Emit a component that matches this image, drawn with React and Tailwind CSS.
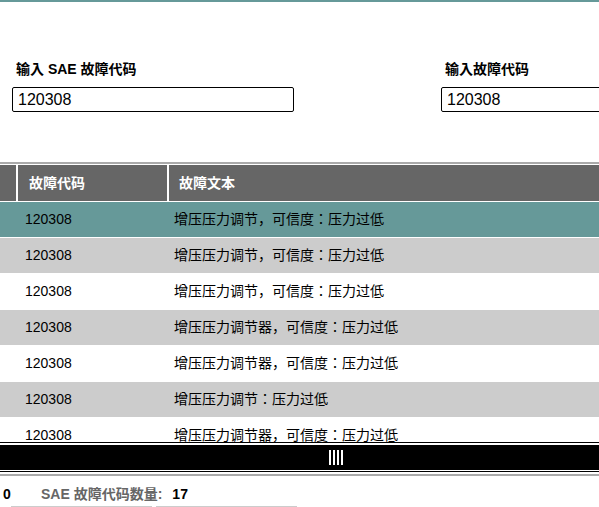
import React from "react";

const rows = [
  { code: "120308", text: "增压压力调节，可信度：压力过低", bg: "bg-[#669999]" },
  { code: "120308", text: "增压压力调节，可信度：压力过低", bg: "bg-[#cccccc]" },
  { code: "120308", text: "增压压力调节，可信度：压力过低", bg: "bg-white" },
  { code: "120308", text: "增压压力调节器，可信度：压力过低", bg: "bg-[#cccccc]" },
  { code: "120308", text: "增压压力调节器，可信度：压力过低", bg: "bg-white" },
  { code: "120308", text: "增压压力调节：压力过低", bg: "bg-[#cccccc]" },
  { code: "120308", text: "增压压力调节器，可信度：压力过低", bg: "bg-white" },
];

export default function App() {
  return (
    <div
      className="w-[599px] h-[507px] overflow-hidden bg-white flex flex-col text-black"
      style={{ fontFamily: '"Liberation Sans", Arial, "Noto Sans CJK JP", "Noto Sans CJK SC", sans-serif' }}
    >
      <div className="h-[2px] bg-[#669999] shrink-0" />
      {/* inputs */}
      <div className="flex shrink-0 pt-[59px] h-[160px]">
        <div className="ml-[12px] w-[282px] shrink-0 flex flex-col">
          <div className="pl-[4px] text-[14px] font-bold leading-[16px]">输入 SAE 故障代码</div>
          <div className="mt-[10px] h-[25px] border border-black rounded-[2px] pl-[5px] text-[16px] leading-[23px]">
            120308
          </div>
        </div>
        <div className="ml-[147px] w-[282px] shrink-0 flex flex-col">
          <div className="pl-[4px] text-[14px] font-bold leading-[16px]">输入故障代码</div>
          <div className="mt-[10px] h-[25px] border border-black rounded-[2px] pl-[5px] text-[16px] leading-[23px]">
            120308
          </div>
        </div>
      </div>
      {/* table */}
      <div className="h-[2px] bg-[#aaaaaa] shrink-0" />
      <div className="h-[1px] bg-white shrink-0" />
      <div className="flex h-[36px] bg-[#666666] shrink-0 text-white text-[14px] font-bold items-center">
        <div className="w-[16px] h-full" />
        <div className="w-[2px] h-full bg-white" />
        <div className="w-[149px] pl-[11px]">故障代码</div>
        <div className="w-[2px] h-full bg-white" />
        <div className="flex-1 pl-[10px]">故障文本</div>
      </div>
      <div className="h-[1px] bg-white shrink-0" />
      <div className="h-[240px] overflow-hidden shrink-0">
        {rows.map((r, i) => (
          <div key={i} className={`flex h-[36px] border-b border-white items-center text-[14px] ${r.bg}`}>
            <div className="w-[174px] pl-[25px]">{r.code}</div>
            <div className="flex-1">{r.text}</div>
          </div>
        ))}
      </div>
      {/* splitter */}
      <div className="h-[1px] bg-black shrink-0" />
      <div className="h-[2px] bg-white shrink-0" />
      <div className="h-[25px] bg-black shrink-0 flex items-center justify-center pl-[72px]">
        <div className="flex gap-[2px] h-[15px]">
          <div className="w-[2px] h-full bg-white" />
          <div className="w-[2px] h-full bg-white" />
          <div className="w-[2px] h-full bg-white" />
          <div className="w-[2px] h-full bg-white" />
        </div>
      </div>
      <div className="h-[1px] bg-white shrink-0" />
      <div className="h-[1px] bg-black shrink-0" />
      <div className="h-[2px] bg-white shrink-0" />
      <div className="h-[2px] bg-[#aaaaaa] shrink-0" />
      {/* footer */}
      <div className="flex h-[30px] pt-[10px] shrink-0 text-[14px] font-bold leading-[16px]">
        <div className="w-[41px] pl-[3px]">0</div>
        <div className="text-[#666666]">SAE 故障代码数量:</div>
        <div className="ml-[10px]">17</div>
      </div>
      <div className="flex gap-[4px] pl-[11px] shrink-0">
        <div className="w-[141px] h-[2px] bg-[#cccccc]" />
        <div className="w-[141px] h-[2px] bg-[#cccccc]" />
      </div>
    </div>
  );
}
